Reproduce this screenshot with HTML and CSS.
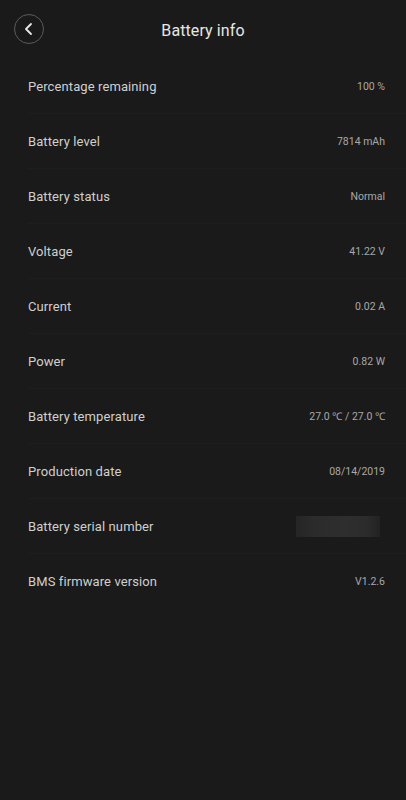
FILE: index.html
```html
<!DOCTYPE html>
<html lang="en">
<head>
    <meta charset="UTF-8">
    <meta name="viewport" content="width=device-width, initial-scale=1.0">
    <title>Battery info</title>
    <link rel="stylesheet" href="styles.css">
</head>
<body>
    <header class="topbar">
        <button class="back" aria-label="Back">
            <svg width="12" height="14" viewBox="0 0 12 14">
                <path d="M8 2 L3 7 L8 12" fill="none" stroke="#e8e8e8" stroke-width="1.8" stroke-linecap="round" stroke-linejoin="round"/>
            </svg>
        </button>
        <h1>Battery info</h1>
    </header>

    <ul class="info">
        <li><span class="label">Percentage remaining</span><span class="value">100 %</span></li>
        <li><span class="label">Battery level</span><span class="value">7814 mAh</span></li>
        <li><span class="label">Battery status</span><span class="value">Normal</span></li>
        <li><span class="label">Voltage</span><span class="value">41.22 V</span></li>
        <li><span class="label">Current</span><span class="value">0.02 A</span></li>
        <li><span class="label">Power</span><span class="value">0.82 W</span></li>
        <li><span class="label">Battery temperature</span><span class="value">27.0 ℃ / 27.0 ℃</span></li>
        <li><span class="label">Production date</span><span class="value">08/14/2019</span></li>
        <li><span class="label">Battery serial number</span><span class="value"><span class="blur"></span></span></li>
        <li><span class="label">BMS firmware version</span><span class="value">V1.2.6</span></li>
    </ul>
</body>
</html>
```

FILE: styles.css
```css
body {
    margin: 0;
    background: #1a1a1a;
    font-family: Roboto, "Liberation Sans", sans-serif;
    color: #d0d0d0;
    min-height: 800px;
}

.topbar {
    height: 60px;
    display: flex;
    align-items: center;
    justify-content: center;
    position: relative;
}

.back {
    position: absolute;
    left: 14px;
    top: 14px;
    width: 30px;
    height: 30px;
    border-radius: 50%;
    border: 1px solid #5a5a5a;
    background: transparent;
    padding: 0;
    display: flex;
    align-items: center;
    justify-content: center;
}

h1 {
    margin: 0;
    font-size: 16px;
    font-weight: 400;
    color: #e6e6e6;
    letter-spacing: 0.1px;
}

.info {
    list-style: none;
    margin: 0;
    padding: 0 0 0 28px;
}

.info li {
    height: 55px;
    display: flex;
    align-items: center;
    justify-content: space-between;
    padding-right: 21px;
    border-bottom: 1px solid #1e1e1e;
    box-sizing: border-box;
}

.info li:first-child {
    margin-top: -1px;
}

.info li:last-child {
    border-bottom: none;
}

.label {
    font-size: 13px;
    color: #cfcfcf;
    letter-spacing: 0.1px;
}

.value {
    font-size: 10.5px;
    color: #a8a8a8;
}

.blur {
    display: block;
    width: 84px;
    height: 21px;
    margin-right: 5px;
    margin-left: 10px;
    background: linear-gradient(to right, #252525 0%, #2b2b2b 20%, #2e2e2e 60%, #2b2b2b 85%, #222 100%);
}
```
